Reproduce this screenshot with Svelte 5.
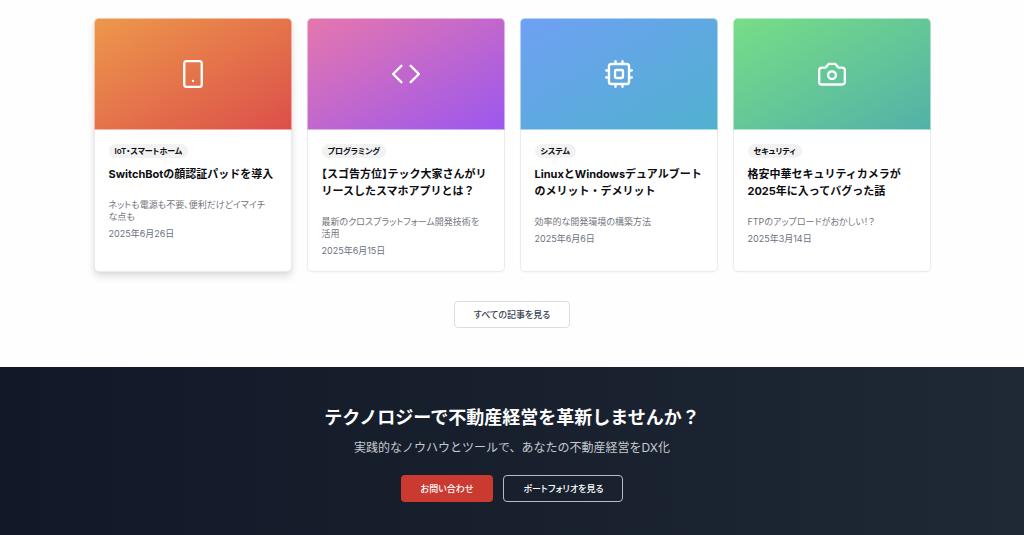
<script>
  const articles = [
    { icon: 'phone', tone: 'orange', tag: 'IoT・スマートホーム', title: 'SwitchBotの顔認証パッドを導入', text: 'ネットも電源も不要、便利だけどイマイチな点も', date: '2025年6月26日', iso: '2025-06-26', raised: true },
    { icon: 'code', tone: 'purple', tag: 'プログラミング', trim: true, title: '【スゴ告方位】テック大家さんがリリースしたスマホアプリとは？', text: '最新のクロスプラットフォーム開発技術を活用', date: '2025年6月15日', iso: '2025-06-15' },
    { icon: 'cpu', tone: 'blue', tag: 'システム', title: 'LinuxとWindowsデュアルブートのメリット・デメリット', text: '効率的な開発環境の構築方法', date: '2025年6月6日', iso: '2025-06-06' },
    { icon: 'camera', tone: 'green', tag: 'セキュリティ', title: '格安中華セキュリティカメラが2025年に入ってバグった話', text: 'FTPのアップロードがおかしい！？', date: '2025年3月14日', iso: '2025-03-14' }
  ];
</script>

<main>
  <section class="articles">
    <div class="grid">
      {#each articles as item}
        <article class="card {item.tone}" class:raised={item.raised}>
          <div class="cover">
            <svg viewBox="0 0 24 24" aria-hidden="true">
              {#if item.icon === 'phone'}
                <rect x="4.5" y="1" width="15" height="22" rx="2" />
                <path d="M12 18h.01" />
              {:else if item.icon === 'code'}
                <path d="m16 19 7-7-7-7M8 5l-7 7 7 7" />
              {:else if item.icon === 'cpu'}
                <rect x="3.4" y="3.4" width="17.2" height="17.2" rx="2" />
                <rect x="8.6" y="8.6" width="6.8" height="6.8" rx="1" />
                <path d="M9 1v2M15 1v2M9 21v2M15 21v2M1 9h2M1 15h2M21 9h2M21 15h2" />
              {:else}
                <path d="M14.7 3.3H9.3L6.6 6.5H3.2A2.2 2.2 0 0 0 1 8.7v10.1A2.2 2.2 0 0 0 3.2 21h17.6A2.2 2.2 0 0 0 23 18.8V8.7a2.2 2.2 0 0 0-2.2-2.2h-3.4z" />
                <circle cx="12" cy="13" r="3.3" />
              {/if}
            </svg>
          </div>
          <div class="body">
            <span class="tag">{item.tag}</span>
            <h3 class:trim={item.trim}>{item.title}</h3>
            <p>{item.text}</p>
            <time datetime={item.iso}>{item.date}</time>
          </div>
        </article>
      {/each}
    </div>
    <a class="button outline" href="#articles">すべての記事を見る</a>
  </section>

  <section class="cta">
    <h2>テクノロジーで不動産経営を革新しませんか？</h2>
    <p>実践的なノウハウとツールで、あなたの不動産経営をDX化</p>
    <div class="actions">
      <a class="button primary" href="#contact">お問い合わせ</a>
      <a class="button ghost" href="#portfolio">ポートフォリオを見る</a>
    </div>
  </section>
</main>

<style>
  :global(body) {
    margin: 0;
    background: #fefefe;
  }
  main {
    font-family: Inter, "Noto Sans CJK JP", sans-serif;
    color: #0c0c10;
  }
  h2, h3, p {
    margin: 0;
  }
  .articles {
    display: flex;
    flex-direction: column;
    align-items: center;
    gap: 29px;
    padding: 18px 24px 39px;
  }
  .grid {
    display: grid;
    grid-template-columns: repeat(4, minmax(0, 1fr));
    gap: 15px;
    width: 100%;
    max-width: 837px;
  }
  .card {
    box-sizing: border-box;
    border: 1px solid #ebebee;
    border-radius: 5px;
    background: #fff;
    box-shadow: 0 1px 2px #00000008;
  }
  .raised {
    box-shadow: 0 5px 9px #0000001a, 0 2px 4px #0000000d;
  }
  .cover {
    display: flex;
    align-items: center;
    justify-content: center;
    box-sizing: border-box;
    height: 112px;
    margin: -1px -1px 0;
    border: 1px solid #ffffff80;
    border-radius: 5px 5px 0 0;
    background-origin: border-box;
  }
  .orange .cover { background-image: linear-gradient(to bottom right, #ed984b, #dc4f4a); }
  .purple .cover { background-image: linear-gradient(to bottom right, #e677ad, #9b57ef); }
  .blue .cover { background-image: linear-gradient(to bottom right, #6fa0f4, #50b1cf); }
  .green .cover { background-image: linear-gradient(to bottom right, #77de86, #52b1a8); }
  svg {
    width: 28px;
    height: 28px;
    fill: none;
    stroke: #fff;
    stroke-width: 2;
    stroke-linecap: round;
    stroke-linejoin: round;
  }
  .body {
    display: flex;
    flex-direction: column;
    align-items: flex-start;
    padding: 14px 11px 14px 14px;
  }
  .tag {
    padding: 0 6px;
    border-radius: 7px;
    background: #f2f2f3;
    font-size: 8px;
    font-weight: 600;
    line-height: 14px;
    font-feature-settings: "palt";
  }
  h3 {
    margin-top: 8px;
    font-size: 11px;
    font-weight: 700;
    line-height: 17px;
  }
  .trim {
    font-feature-settings: "halt";
  }
  .card p {
    margin-top: 16px;
    padding-right: 8px;
    color: #75757e;
    font-size: 9px;
    line-height: 12px;
    font-feature-settings: "palt";
  }
  time {
    margin-top: 5px;
    color: #6b7280;
    font-size: 9px;
    line-height: 12px;
  }
  .button {
    box-sizing: border-box;
    padding: 0 19px;
    border: 1px solid transparent;
    border-radius: 4px;
    font-size: 9px;
    font-weight: 500;
    line-height: 25px;
    text-decoration: none;
    font-feature-settings: "palt";
  }
  .outline {
    border-color: #d9dce1;
    background: #fff;
    color: #374151;
  }
  .cta {
    display: flex;
    flex-direction: column;
    align-items: center;
    padding: 37px 24px 33px;
    background: linear-gradient(to right, #111827, #1f2835);
    color: #fff;
    text-align: center;
  }
  h2 {
    font-size: 18px;
    font-weight: 700;
    line-height: 28px;
  }
  .cta p {
    margin-top: 7px;
    color: #c6c9cf;
    font-size: 12px;
    line-height: 17px;
  }
  .actions {
    display: flex;
    gap: 10px;
    margin-top: 19px;
  }
  .primary {
    background: #ca3a31;
    color: #fff;
  }
  .ghost {
    border-color: #b8bbc0;
    color: #fff;
  }
</style>
